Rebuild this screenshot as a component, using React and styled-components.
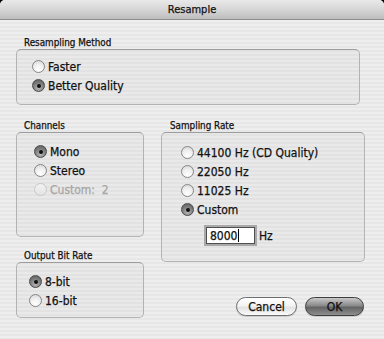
import React from 'react';
import styled, { createGlobalStyle } from 'styled-components';

const GlobalStyle = createGlobalStyle`
  html, body {
    margin: 0;
    padding: 0;
    background: #000;
  }
  body {
    font-family: "DejaVu Sans Condensed", "Liberation Sans", Arial, sans-serif;
    color: #111;
    -webkit-text-stroke: 0.25px currentColor;
  }
`;

const Window = styled.div`
  width: 384px;
  height: 339px;
  border-radius: 5px 5px 0 0;
  overflow: hidden;
  display: flex;
  flex-direction: column;
  background: repeating-linear-gradient(
    to bottom,
    #eeeeee 0px,
    #eeeeee 2px,
    #e7e7e7 2px,
    #e7e7e7 4px
  );
`;

const TitleBar = styled.div`
  height: 20px;
  flex: none;
  box-sizing: border-box;
  display: flex;
  align-items: center;
  justify-content: center;
  font-size: 11px;
  color: #111;
  background: linear-gradient(to bottom, #e9e9e9 0%, #d4d4d4 55%, #bdbdbd 100%);
  border-bottom: 1px solid #8c8c8c;
`;

const Content = styled.div`
  padding: 17px 0 0 16px;
  display: flex;
  flex-direction: column;
`;

const Group = styled.div`
  display: flex;
  flex-direction: column;
  width: ${p => p.$width}px;
`;

const GroupLabel = styled.div`
  font-size: 9.8px;
  line-height: 12px;
  height: 12px;
  padding-left: ${p => p.$indent || 8}px;
  color: #111;
`;

const GroupBox = styled.div`
  box-sizing: border-box;
  height: ${p => p.$height}px;
  border: 1px solid #b3b3b3;
  border-top-color: #9c9c9c;
  border-radius: 5px;
  background: rgba(0, 0, 0, 0.018);
  padding: ${p => p.$padTop}px 0 0 ${p => p.$padLeft}px;
  display: flex;
  flex-direction: column;
`;

const Columns = styled.div`
  display: grid;
  grid-template-columns: 128px 204px;
  column-gap: 17px;
  margin-top: 15px;
`;

const Column = styled.div`
  display: flex;
  flex-direction: column;
  gap: ${p => p.$gap || 0}px;
`;

const Option = styled.div`
  height: 19px;
  display: flex;
  align-items: center;
  gap: 3px;
  font-size: 12px;
  white-space: pre;
  color: ${p => (p.$disabled ? '#a6a6a6' : '#111')};
`;

const RadioDot = styled.span`
  box-sizing: border-box;
  width: 13px;
  height: 13px;
  border-radius: 50%;
  flex: none;
  position: relative;
  border: 1px solid ${p => (p.$disabled ? '#c8c8c8' : p.$checked ? '#4a4a4a' : '#868686')};
  background: ${p =>
    p.$checked
      ? 'radial-gradient(circle at 50% 75%, #b8b8b8 0%, #7c7c7c 55%, #5a5a5a 100%)'
      : p.$disabled
      ? 'linear-gradient(to bottom, #f2f2f2, #e4e4e4)'
      : 'radial-gradient(circle at 50% 80%, #ffffff 0%, #f0f0f0 50%, #d0d0d0 100%)'};

  &::after {
    content: '';
    display: ${p => (p.$checked ? 'block' : 'none')};
    position: absolute;
    left: 50%;
    top: 50%;
    width: 4px;
    height: 4px;
    margin: -2px 0 0 -2px;
    border-radius: 50%;
    background: #111;
  }
`;

const Radio = ({ label, checked, disabled }) => (
  <Option $disabled={disabled}>
    <RadioDot $checked={checked} $disabled={disabled} />
    <span>{label}</span>
  </Option>
);

const FieldRow = styled.div`
  display: flex;
  align-items: center;
  gap: 2px;
  margin: 6px 0 0 23px;
  font-size: 12px;
`;

const TextField = styled.div`
  box-sizing: border-box;
  border: 1px solid #4f4f4f;
  box-shadow: 0 0 0 2px #a9a9a9;
  margin: 2px;
  width: 49px;
  height: 17px;
  background: #fff;
  display: flex;
  align-items: center;
  padding-left: 3px;
  font-size: 12px;
  color: #111;
`;

const Caret = styled.span`
  width: 1px;
  height: 13px;
  background: #000;
  margin-left: 1px;
`;

const Buttons = styled.div`
  display: flex;
  justify-content: flex-end;
  gap: 8px;
  margin-top: 35px;
  padding-right: 1px;
`;

const PillButton = styled.div`
  box-sizing: border-box;
  width: ${p => p.$width}px;
  height: 19px;
  border-radius: 10px;
  display: flex;
  align-items: center;
  justify-content: center;
  font-size: 12px;
  color: #111;
  border: 1px solid ${p => (p.$primary ? '#3e3e3e' : '#6e6e6e')};
  background: ${p =>
    p.$primary
      ? 'linear-gradient(to bottom, #c8c8c8 0%, #8a8a8a 45%, #646464 55%, #8e8e8e 100%)'
      : 'linear-gradient(to bottom, #ffffff 0%, #f4f4f4 45%, #e2e2e2 55%, #fbfbfb 100%)'};
  box-shadow: 0 1px 1px rgba(0, 0, 0, 0.15);
`;

const App = () => {
  return (
    <Window>
      <GlobalStyle />
      <TitleBar>Resample</TitleBar>
      <Content>
        <Group $width={344}>
          <GroupLabel>Resampling Method</GroupLabel>
          <GroupBox $height={56} $padTop={7} $padLeft={15}>
            <Radio label="Faster" />
            <Radio label="Better Quality" checked />
          </GroupBox>
        </Group>

        <Columns>
          <Column $gap={13}>
            <Group $width={128}>
              <GroupLabel>Channels</GroupLabel>
              <GroupBox $height={105} $padTop={9} $padLeft={17}>
                <Radio label="Mono" checked />
                <Radio label="Stereo" />
                <Radio label="Custom:  2" disabled />
              </GroupBox>
            </Group>
            <Group $width={128}>
              <GroupLabel>Output Bit Rate</GroupLabel>
              <GroupBox $height={56} $padTop={9} $padLeft={12}>
                <Radio label="8-bit" checked />
                <Radio label="16-bit" />
              </GroupBox>
            </Group>
          </Column>

          <Column>
            <Group $width={204}>
              <GroupLabel $indent={9}>Sampling Rate</GroupLabel>
              <GroupBox $height={130} $padTop={10} $padLeft={19}>
                <Radio label="44100 Hz (CD Quality)" />
                <Radio label="22050 Hz" />
                <Radio label="11025 Hz" />
                <Radio label="Custom" checked />
                <FieldRow>
                  <TextField>
                    8000
                    <Caret />
                  </TextField>
                  <span>Hz</span>
                </FieldRow>
              </GroupBox>
            </Group>
            <Buttons>
              <PillButton $width={61}>Cancel</PillButton>
              <PillButton $width={59} $primary>
                OK
              </PillButton>
            </Buttons>
          </Column>
        </Columns>
      </Content>
    </Window>
  );
};

export default App;
